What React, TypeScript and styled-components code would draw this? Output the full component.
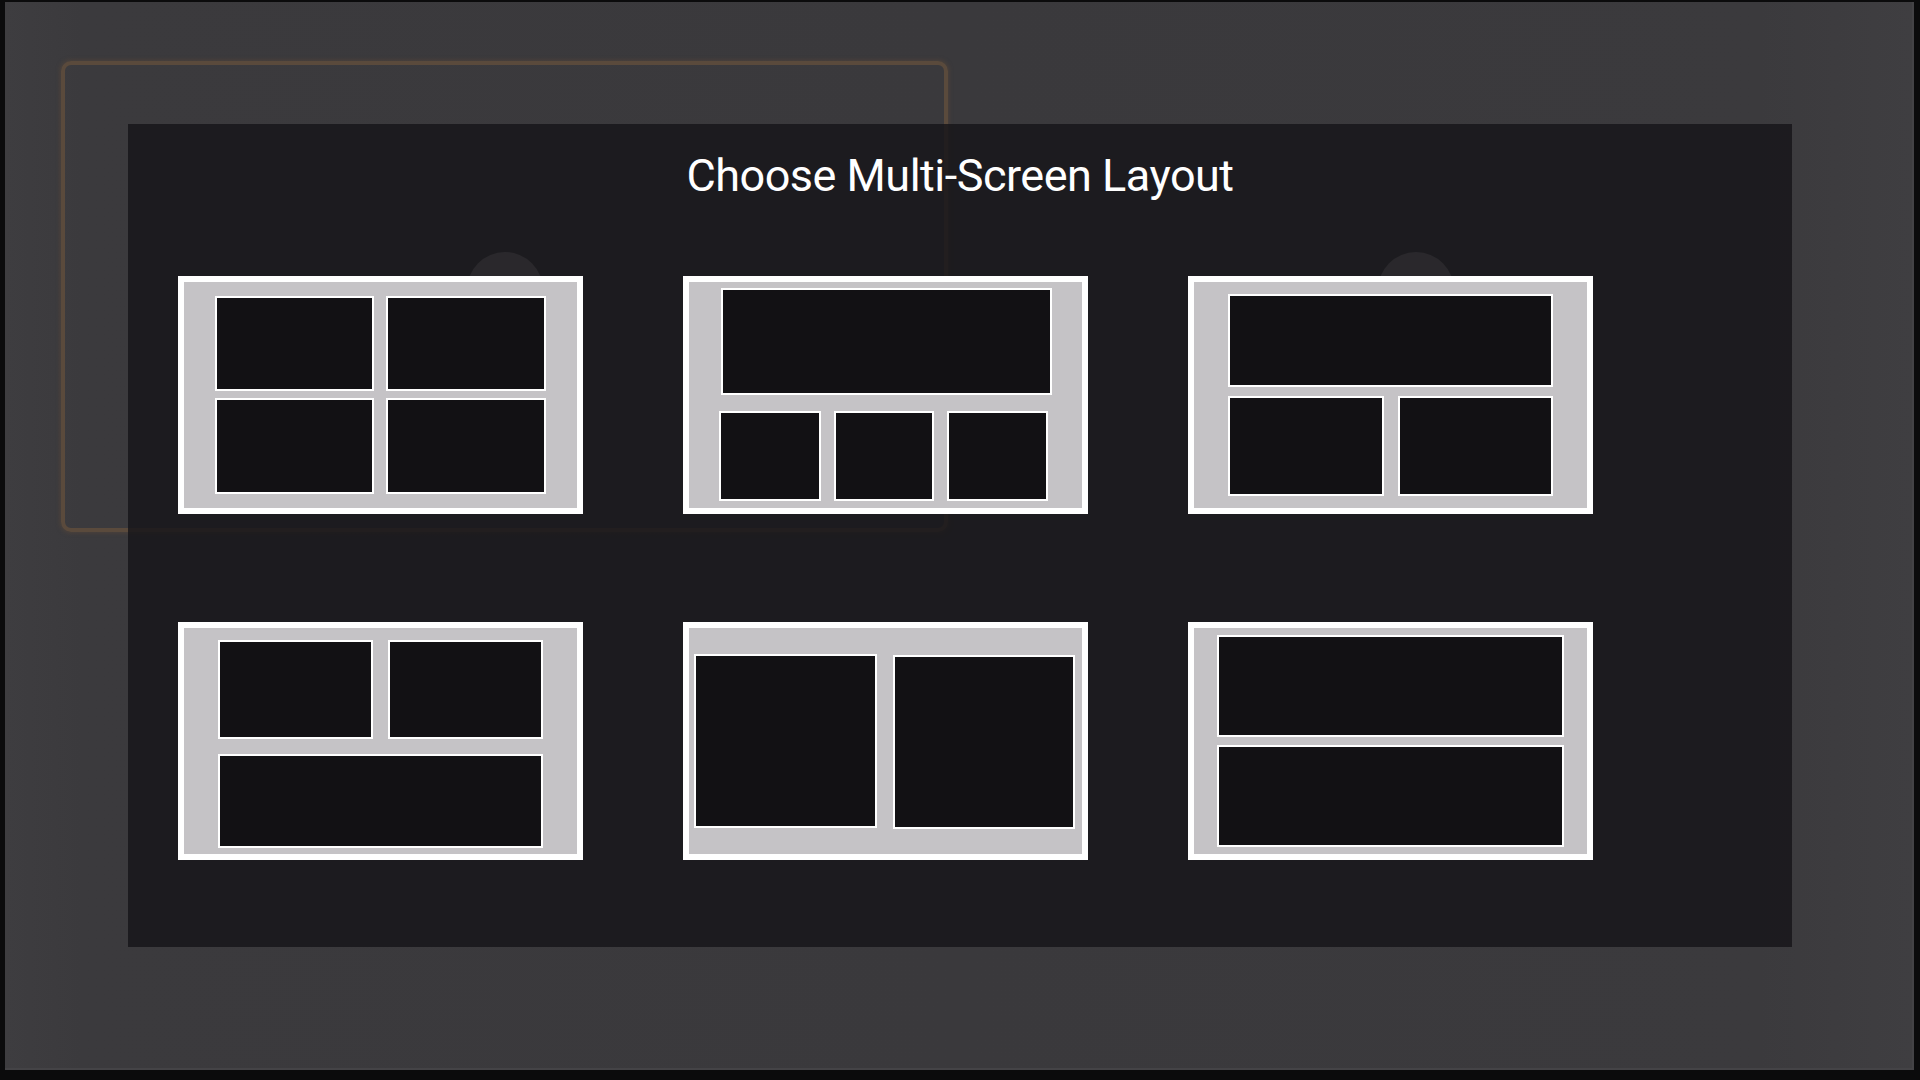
import React from "react";
import styled, { createGlobalStyle } from "styled-components";

const GlobalStyle = createGlobalStyle`
  html, body {
    margin: 0;
    padding: 0;
    background: #0b0b0c;
    font-family: Roboto, "Noto Sans", "Liberation Sans", sans-serif;
  }
  * { box-sizing: border-box; }
`;

const Page = styled.div`
  width: 1920px;
  height: 1080px;
  display: flex;
  padding: 2px 6px 10px 5px;
  background: #0b0b0c;
`;

const Screen = styled.div`
  position: relative;
  flex: 1;
  overflow: hidden;
  background: linear-gradient(90deg, #3e3d40 0%, #3b3a3d 4%, #3a393c 50%, #3b3a3d 92%, #3f3e41 100%);
  border-right: 2px solid #444346;
  border-bottom: 2px solid #444346;
`;

const Backdrop = styled.div`
  display: flex;
  gap: 24px;
  padding: 59px 0 0 56px;
`;

const BgCard = styled.div<{ $focused?: boolean }>`
  flex: 0 0 887px;
  height: 471px;
  border: 4px solid ${(p) => (p.$focused ? "#5a4a3c" : "transparent")};
  border-radius: 10px;
  box-shadow: ${(p) => (p.$focused ? "0 0 4px 1px rgba(90, 72, 56, 0.6)" : "none")};
  display: flex;
  justify-content: center;
  padding-top: 187px;
`;

const Avatar = styled.div`
  width: 76px;
  height: 76px;
  border-radius: 50%;
  background: #838287;
`;

const Dialog = styled.div`
  position: absolute;
  left: 123px;
  top: 122px;
  width: 1664px;
  height: 823px;
  background: rgba(22, 21, 24, 0.82);
  padding-top: 29px;
`;

const Title = styled.h1`
  margin: 0;
  font-family: Roboto, "Noto Sans", sans-serif;
  font-weight: 400;
  font-size: 45px;
  letter-spacing: -0.5px;
  line-height: 45px;
  color: #ffffff;
  text-align: center;
`;

const LayoutGrid = styled.div`
  margin-top: 78px;
  padding-left: 50px;
  display: grid;
  grid-template-columns: repeat(3, 405px);
  column-gap: 100px;
  row-gap: 108px;
`;

const LayoutCard = styled.button`
  width: 405px;
  height: 238px;
  padding: 0;
  margin: 0;
  border: 6px solid #ffffff;
  background: #c5c3c6;
  display: block;
  cursor: pointer;
  svg {
    display: block;
  }
`;

type Tile = [number, number, number, number];

const layouts: { name: string; tiles: Tile[] }[] = [
  {
    name: "Quad",
    tiles: [
      [31, 14, 159, 95],
      [202, 14, 160, 95],
      [31, 116, 159, 96],
      [202, 116, 160, 96],
    ],
  },
  {
    name: "One top, three bottom",
    tiles: [
      [32, 6, 331, 107],
      [30, 129, 102, 90],
      [145, 129, 100, 90],
      [258, 129, 101, 90],
    ],
  },
  {
    name: "One top, two bottom",
    tiles: [
      [34, 12, 325, 93],
      [34, 114, 156, 100],
      [204, 114, 155, 100],
    ],
  },
  {
    name: "Two top, one bottom",
    tiles: [
      [34, 12, 155, 99],
      [204, 12, 155, 99],
      [34, 126, 325, 94],
    ],
  },
  {
    name: "Side by side",
    tiles: [
      [5, 26, 183, 174],
      [204, 27, 182, 174],
    ],
  },
  {
    name: "Stacked",
    tiles: [
      [23, 7, 347, 102],
      [23, 117, 347, 102],
    ],
  },
];

const LayoutPreview: React.FC<{ tiles: Tile[] }> = ({ tiles }) => (
  <svg width="393" height="226" viewBox="0 0 393 226">
    {tiles.map(([x, y, w, h], i) => (
      <rect
        key={i}
        x={x + 1}
        y={y + 1}
        width={w - 2}
        height={h - 2}
        fill="#121114"
        stroke="#ffffff"
        strokeWidth={2}
      />
    ))}
  </svg>
);

export default function App() {
  return (
    <>
      <GlobalStyle />
      <Page>
        <Screen>
          <Backdrop>
            <BgCard $focused>
              <Avatar />
            </BgCard>
            <BgCard>
              <Avatar />
            </BgCard>
          </Backdrop>
          <Dialog>
            <Title>Choose Multi-Screen Layout</Title>
            <LayoutGrid>
              {layouts.map((l) => (
                <LayoutCard key={l.name} aria-label={l.name}>
                  <LayoutPreview tiles={l.tiles} />
                </LayoutCard>
              ))}
            </LayoutGrid>
          </Dialog>
        </Screen>
      </Page>
    </>
  );
}
